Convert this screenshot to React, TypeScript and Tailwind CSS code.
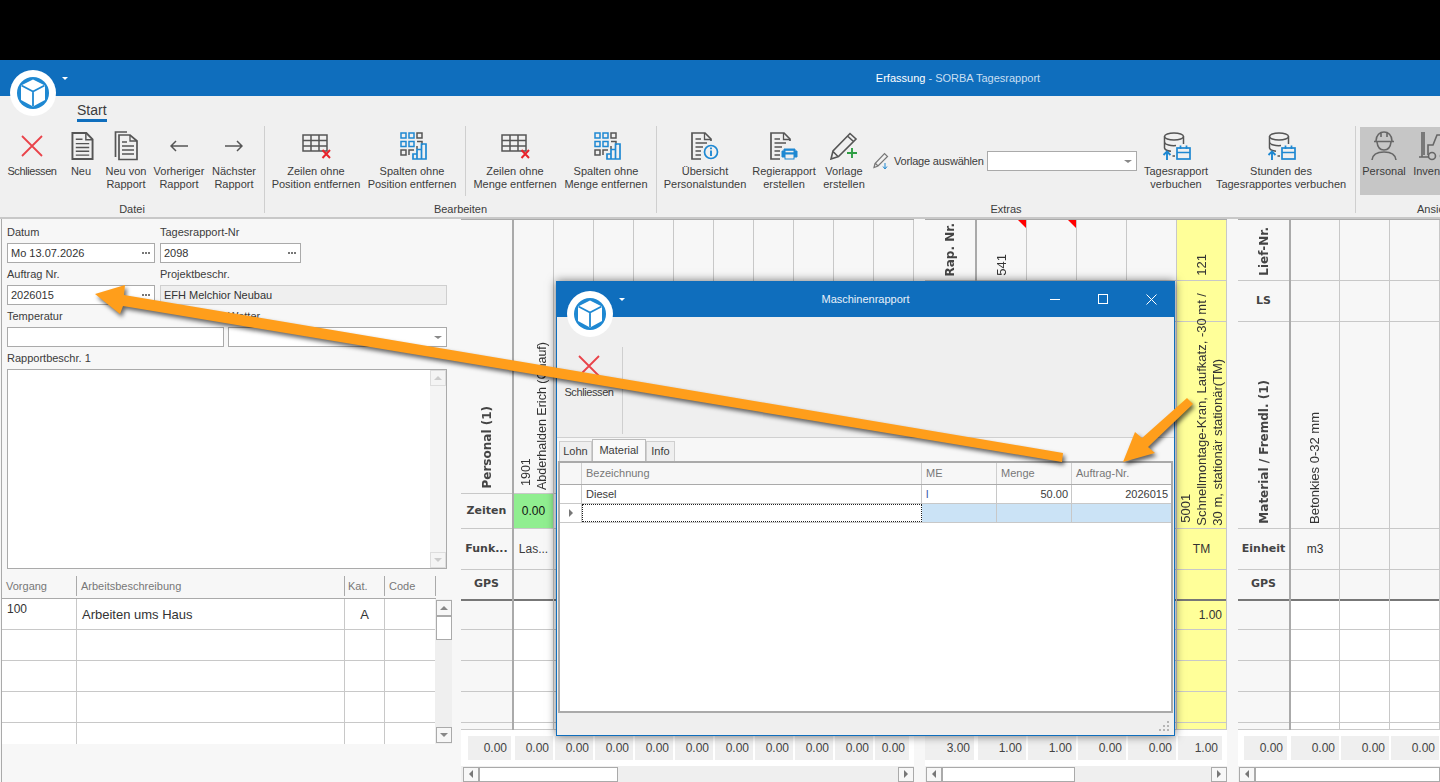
import React from "react";
import { Fragment } from "react";

const GRAY = "#555555";
const BLUE = "#1e88d2";
const RED = "#e9434a";

// Shared logo: white disc with the blue cube
const Logo = () => (
  <svg width="46" height="46" viewBox="0 0 46 46">
    <circle cx="23" cy="23" r="23" fill="#ffffff" />
    <circle cx="23" cy="23" r="16" fill={BLUE} />
    <path d="M23 9.5 35 15.5V30L23 36.5 11 30V15.5Z" fill="#ffffff" />
    <path d="M11.5 15.5 23 21.5 34.5 15.5M23 21.5V36" fill="none" stroke={BLUE} strokeWidth="1.8" />
  </svg>
);

const CloseX = () => (
  <svg width="22" height="22" viewBox="0 0 22 22">
    <path d="M1 1 21 21M21 1 1 21" stroke={RED} strokeWidth="1.8" fill="none" />
  </svg>
);

const DocIcon = () => (
  <svg className="ml-[2px]" width="23" height="30" viewBox="0 0 24 30" fill="none" stroke={GRAY} strokeWidth="2">
    <path d="M1.5 1.5H16L22.5 8V28.5H1.5Z" />
    <path d="M15.5 1.5V8.5H22.5" strokeWidth="1.5" />
    <path d="M5 8H12M5 12.5H19M5 16.5H19M5 20.5H19M5 24.5H19" strokeWidth="1.5" />
  </svg>
);

const CopyIcon = () => (
  <svg width="24" height="30" viewBox="0 0 24 30" fill="none" stroke={GRAY} strokeWidth="1.7">
    <path d="M1.5 26V1H13" />
    <path d="M5 4H16L23 10V28.5H5Z" />
    <path d="M16 4V10H23" strokeWidth="1.3" />
    <path d="M8 11H13M8 15H20M8 19H20M8 23H20" strokeWidth="1.4" />
  </svg>
);

const ArrowLeft = () => (
  <svg width="18" height="12" viewBox="0 0 18 12" fill="none" stroke={GRAY} strokeWidth="1.5">
    <path d="M18 6H1M6 1 1 6 6 11" />
  </svg>
);

const ArrowRight = () => (
  <svg width="18" height="12" viewBox="0 0 18 12" fill="none" stroke={GRAY} strokeWidth="1.5">
    <path d="M0 6H17M12 1 17 6 12 11" />
  </svg>
);

const TableX = () => (
  <svg width="29" height="25" viewBox="0 0 29 25" fill="none">
    <path d="M1 1H25V17H1ZM1 6.5H25M1 12H25M9 1V17M17 1V17" stroke={GRAY} strokeWidth="1.5" />
    <path d="M20.5 16 28 24M28 16 20.5 24" stroke="#e8242c" strokeWidth="2" />
  </svg>
);

const QrChart = () => (
  <svg className="ml-[3px]" width="28" height="28" viewBox="0 0 28 28" fill="none" strokeWidth="1.5">
    <g stroke={BLUE}>
      <rect x="1" y="1" width="5" height="5" />
      <rect x="9" y="1" width="5" height="5" />
      <rect x="1" y="9.5" width="5" height="5" />
      <rect x="9" y="9.5" width="5" height="5" />
    </g>
    <g stroke={GRAY}>
      <rect x="17" y="1" width="5" height="5" />
      <rect x="1" y="18" width="5" height="5" />
      <path d="M17 9.5H22V13M9 23V18H14M17 17V14" />
    </g>
    <g stroke={BLUE} strokeWidth="1.7">
      <path d="M13 22H17V27H13ZM17 17.5H21.5V27H17ZM21.5 12H26V27H21.5Z" />
    </g>
  </svg>
);

const DocBase = () => (
  <g fill="none" stroke={GRAY}>
    <path d="M1 23V1H14L20 7V9" strokeWidth="1.7" />
    <path d="M1 23V27H10" strokeWidth="1.7" />
    <path d="M13.5 1V7.5H20" strokeWidth="1.3" />
    <path d="M4.5 7H10M4.5 11H16M4.5 15H12M4.5 19H10M4.5 23H10" strokeWidth="1.4" />
  </g>
);

const DocInfo = () => (
  <svg width="28" height="28" viewBox="0 0 28 28">
    <DocBase />
    <circle cx="20" cy="20" r="6.5" fill="#f0f0f0" stroke={BLUE} strokeWidth="1.7" />
    <path d="M20 18.5V24M20 15.5V17.2" stroke={BLUE} strokeWidth="1.9" />
  </svg>
);

const DocPrinter = () => (
  <svg width="28" height="28" viewBox="0 0 28 28">
    <DocBase />
    <path d="M14 19V17H25V19H27V25H12V19Z" fill={BLUE} stroke={BLUE} />
    <rect x="15" y="22" width="9" height="5" fill="#f0f0f0" stroke={BLUE} />
    <rect x="15.5" y="18.8" width="8" height="1.5" fill="#f0f0f0" />
  </svg>
);

const PencilPlus = () => (
  <svg width="28" height="28" viewBox="0 0 28 28" fill="none">
    <path d="M1 27 3 19 20 1.5 26 7 8.5 24.5ZM3 19.5 8 24.5M17.5 4 23.5 9.5" stroke={GRAY} strokeWidth="1.6" />
    <path d="M22 16V26M17 21H27" stroke="#2f9e44" strokeWidth="1.9" />
  </svg>
);

const PencilDown = () => (
  <svg width="16" height="18" viewBox="0 0 16 18" fill="none">
    <path d="M1 15.5 2 11.5 11.5 1.5 14.5 4.5 5 14ZM2.5 11.5 5 14" stroke="#777777" strokeWidth="1.2" />
    <path d="M12 11V16M10 14.5 12 17 14 14.5" stroke={BLUE} strokeWidth="1" />
  </svg>
);

const DbCalendar = () => (
  <svg width="29" height="28" viewBox="0 0 29 28" fill="none">
    <g stroke={GRAY} strokeWidth="1.5">
      <ellipse cx="12" cy="4.5" rx="9.5" ry="3.5" />
      <path d="M2.5 4.5V16C3 18 6 19 9 19.3M21.5 4.5V12M2.5 10C3 13 9 14 14 13.6M10.5 24H13" />
    </g>
    <path d="M5 28V20M1.5 23 5 19.5 8.5 23" stroke={BLUE} strokeWidth="1.9" />
    <rect x="15" y="16" width="13" height="11" stroke={BLUE} strokeWidth="1.7" />
    <path d="M15 20.5H28M18.5 13.5V17M24.5 13.5V17" stroke={BLUE} strokeWidth="1.7" />
  </svg>
);

const Helmet = () => (
  <svg width="26" height="30" viewBox="0 0 26 30" fill="none" stroke="#666666" strokeWidth="1.6">
    <path d="M5 10C5 4 9 1 13 1 17 1 21 4 21 10M3 10.5H23M10 1.5V6M16 1.5V6" />
    <path d="M6 11C6.5 16 9 19 13 19 17 19 19.5 16 20 11" />
    <path d="M1 29C1.5 24 6 21 13 21 20 21 24.5 24 25 29" />
  </svg>
);

const Forklift = () => (
  <svg width="30" height="30" viewBox="0 0 30 30" fill="none" stroke="#666666" strokeWidth="1.6">
    <path d="M4 1V26H1M4 26H10M6 1V24" />
    <path d="M10 24V14H15L19 4H27L29 14V24H22" />
    <circle cx="14" cy="25" r="3.5" />
    <circle cx="26" cy="25" r="3.5" />
  </svg>
);

// Big ribbon button: icon above one or two centred lines
const RibbonButton = ({ width, icon, lines, tight }: { width: string; icon: React.ReactNode; lines: string[]; tight?: boolean }) => (
  <div className={`flex flex-col items-center pt-[8px] ${width}`}>
    <div className="flex h-[32px] items-center justify-center">{icon}</div>
    <div className={`mt-[3px] flex flex-col items-center whitespace-nowrap text-[11px] leading-[13px] text-[#3c3c3c] ${tight ? "tracking-[-0.4px]" : ""}`}>
      {lines.map((l) => (
        <span key={l}>{l}</span>
      ))}
    </div>
  </div>
);

const GroupLabel = ({ children }: { children: React.ReactNode }) => (
  <div className="h-[16px] text-center text-[11px] leading-[16px] text-[#3c3c3c]">{children}</div>
);

const RibbonSep = ({ short }: { short?: boolean }) => (
  <div className={`mt-[4px] w-px shrink-0 bg-[#cfcfcf] ${short ? "h-[70px]" : "h-[87px]"}`} />
);

const Ribbon = () => (
  <div className="h-[123px] border-b-2 border-[#c8c8c8] bg-[#f0f0f0]">
    <div className="h-[26px] pl-[77px]">
      <div className="inline-block h-[26px] w-[30px] border-b-[3px] border-[#0f6ebd] pt-[5px] text-[14px] leading-[18px] text-[#3c3c3c]">
        Start
      </div>
    </div>
    <div className="flex">
      <div className="w-[264px] shrink-0">
        <div className="flex h-[79px] pl-[7px]">
          <RibbonButton width="w-[50px]" icon={<CloseX />} lines={["Schliessen"]} tight />
          <RibbonButton width="w-[48px]" icon={<DocIcon />} lines={["Neu"]} />
          <RibbonButton width="w-[42px]" icon={<CopyIcon />} lines={["Neu von", "Rapport"]} />
          <RibbonButton width="w-[64px]" icon={<ArrowLeft />} lines={["Vorheriger", "Rapport"]} />
          <RibbonButton width="w-[46px]" icon={<ArrowRight />} lines={["Nächster", "Rapport"]} />
        </div>
        <GroupLabel>Datei</GroupLabel>
      </div>
      <RibbonSep />
      <div className="w-[391px] shrink-0">
        <div className="flex h-[79px]">
          <RibbonButton width="w-[102px]" icon={<TableX />} lines={["Zeilen ohne", "Position entfernen"]} />
          <RibbonButton width="w-[90px]" icon={<QrChart />} lines={["Spalten ohne", "Position entfernen"]} />
          <div className="ml-[8px]">
            <RibbonSep short />
          </div>
          <RibbonButton width="w-[98px]" icon={<TableX />} lines={["Zeilen ohne", "Menge entfernen"]} />
          <RibbonButton width="w-[84px]" icon={<QrChart />} lines={["Spalten ohne", "Menge entfernen"]} />
        </div>
        <GroupLabel>Bearbeiten</GroupLabel>
      </div>
      <RibbonSep />
      <div className="w-[698px] shrink-0">
        <div className="flex h-[79px]">
          <RibbonButton width="w-[96px]" icon={<DocInfo />} lines={["Übersicht", "Personalstunden"]} />
          <RibbonButton width="w-[62px]" icon={<DocPrinter />} lines={["Regierapport", "erstellen"]} />
          <RibbonButton width="w-[58px]" icon={<PencilPlus />} lines={["Vorlage", "erstellen"]} />
          <div className="mt-[29px] flex h-[20px] w-[264px] items-center">
            <PencilDown />
            <span className="ml-[5px] w-[92px] whitespace-nowrap text-[11px] tracking-[-0.2px] text-[#3c3c3c]">Vorlage auswählen</span>
            <div className="relative ml-[1px] h-[20px] w-[150px] border border-[#aaaaaa] bg-white">
              <Caret />
            </div>
          </div>
          <RibbonButton width="w-[78px]" icon={<DbCalendar />} lines={["Tagesrapport", "verbuchen"]} />
          <RibbonButton width="w-[132px]" icon={<DbCalendar />} lines={["Stunden des", "Tagesrapportes verbuchen"]} />
        </div>
        <GroupLabel>Extras</GroupLabel>
      </div>
      <RibbonSep />
      <div className="w-[84px] shrink-0 overflow-hidden">
        <div className="ml-[4px] mt-[5px] flex h-[68px] w-[110px] bg-[#c6c6c6]">
          <div className="flex w-[48px] flex-col items-center pt-[4px]">
            <Helmet />
            <span className="mt-[4px] text-[11px] leading-[13px] text-[#3c3c3c]">Personal</span>
          </div>
          <div className="flex w-[50px] flex-col items-center pt-[4px]">
            <Forklift />
            <span className="mt-[4px] text-[11px] leading-[13px] text-[#3c3c3c]">Inventar</span>
          </div>
        </div>
        <div className="mt-[6px] h-[16px] whitespace-nowrap pl-[61px] text-[11px] leading-[16px] text-[#3c3c3c]">
          Ansicht
        </div>
      </div>
    </div>
  </div>
);

const Caret = () => (
  <span className="absolute right-[4px] top-[8px] h-0 w-0 border-x-[4px] border-t-[3px] border-x-transparent border-t-[#888888]" />
);

const Dots = () => (
  <span className="absolute right-[4px] top-[8px] flex gap-[1px]">
    <i className="h-[2px] w-[2px] bg-[#777777]" />
    <i className="h-[2px] w-[2px] bg-[#777777]" />
    <i className="h-[2px] w-[2px] bg-[#777777]" />
  </span>
);

const Field = ({ width, label, value, dots, caret, disabled }: {
  width: string;
  label: string;
  value?: string;
  dots?: boolean;
  caret?: boolean;
  disabled?: boolean;
}) => (
  <div className={width}>
    <div className="h-[22px] text-[11px] leading-[22px] text-[#3c3c3c]">{label}</div>
    <div
      className={`relative h-[20px] border pl-[3px] text-[11px] leading-[18px] text-[#333333] ${
        disabled ? "border-[#cfcfcf] bg-[#efefef]" : "border-[#aaaaaa] bg-white"
      }`}
    >
      {value}
      {dots && <Dots />}
      {caret && <Caret />}
    </div>
  </div>
);

const ScrollTri = ({ dir, faint }: { dir: "up" | "down" | "left" | "right"; faint?: boolean }) => {
  if (dir === "up")
    return (
      <span className={`h-0 w-0 border-x-[4px] border-b-[4px] border-x-transparent ${faint ? "border-b-[#cccccc]" : "border-b-[#888888]"}`} />
    );
  if (dir === "down")
    return (
      <span className={`h-0 w-0 border-x-[4px] border-t-[4px] border-x-transparent ${faint ? "border-t-[#cccccc]" : "border-t-[#888888]"}`} />
    );
  if (dir === "left")
    return <span className="h-0 w-0 border-y-[4px] border-r-[4px] border-y-transparent border-r-[#777777]" />;
  return <span className="h-0 w-0 border-y-[4px] border-l-[4px] border-y-transparent border-l-[#777777]" />;
};

const TASK_ROWS = ["h-[31px]", "h-[31px]", "h-[31px]", "h-[31px]", "h-[21px]"];

const LeftPanel = () => (
  <div className="h-[563px] w-[461px] shrink-0 bg-[#f7f7f7] pl-[1px]">
    <div className="h-full border-l border-[#aaaaaa] pl-[5px] pt-[2px]">
      <div className="flex gap-[5px]">
        <Field width="w-[148px]" label="Datum" value="Mo 13.07.2026" dots />
        <Field width="w-[141px]" label="Tagesrapport-Nr" value="2098" dots />
      </div>
      <div className="flex gap-[5px]">
        <Field width="w-[148px]" label="Auftrag Nr." value="2026015" dots />
        <Field width="w-[287px]" label="Projektbeschr." value="EFH Melchior Neubau" disabled />
      </div>
      <div className="flex gap-[4px]">
        <Field width="w-[217px]" label="Temperatur" />
        <Field width="w-[219px]" label="Wetter" caret />
      </div>
      <div className="h-[22px] text-[11px] leading-[22px] text-[#3c3c3c]">Rapportbeschr. 1</div>
      <div className="flex h-[200px] w-[440px] justify-end border border-[#aaaaaa] bg-white">
        <div className="flex w-[16px] flex-col justify-between bg-[#f4f4f4]">
          <div className="flex h-[16px] items-center justify-center border border-[#dddddd]">
            <ScrollTri dir="up" faint />
          </div>
          <div className="flex h-[16px] items-center justify-center border border-[#dddddd]">
            <ScrollTri dir="down" faint />
          </div>
        </div>
      </div>
      <div className="-ml-[5px] mt-[7px] flex h-[23px] w-[434px] items-start border-b border-[#aaaaaa] text-[11px] leading-[20px] text-[#777777]">
        <div className="h-[20px] w-[75px] border-r border-[#aaaaaa] pl-[4px]">Vorgang</div>
        <div className="h-[20px] w-[268px] border-r border-[#aaaaaa] pl-[4px]">Arbeitsbeschreibung</div>
        <div className="h-[20px] w-[40px] border-r border-[#aaaaaa] pl-[3px]">Kat.</div>
        <div className="h-[20px] w-[51px] border-r border-[#aaaaaa] pl-[4px]">Code</div>
      </div>
      <div className="-ml-[5px] flex w-[450px]">
        <div className="w-[433px] bg-white">
          {TASK_ROWS.map((row, i) => (
            <div key={i} className={`flex ${row} ${i < 4 ? "border-b border-[#c8c8c8]" : ""}`}>
              <div className="w-[75px] border-r border-[#c8c8c8] pl-[5px] pt-[2px] text-[12px] leading-[16px] text-[#333333]">
                {i === 0 && "100"}
              </div>
              <div className="w-[268px] border-r border-[#c8c8c8] pl-[5px] text-[13px] leading-[31px] text-[#333333]">
                {i === 0 && "Arbeiten ums Haus"}
              </div>
              <div className="w-[40px] border-r border-[#c8c8c8] text-center text-[13px] leading-[31px] text-[#333333]">
                {i === 0 && "A"}
              </div>
            </div>
          ))}
        </div>
        <div className="flex w-[17px] flex-col items-center justify-between bg-[#efefef] py-[1px]">
          <div className="w-[16px]">
            <div className="flex h-[16px] items-center justify-center border border-[#aaaaaa] bg-[#f7f7f7]">
              <ScrollTri dir="up" />
            </div>
            <div className="h-[24px] border border-[#aaaaaa] bg-white" />
          </div>
          <div className="flex h-[16px] w-[16px] items-center justify-center border border-[#aaaaaa] bg-[#f7f7f7]">
            <ScrollTri dir="down" />
          </div>
        </div>
      </div>
    </div>
  </div>
);

const BOLD = "font-bold [font-family:'DejaVu_Sans',sans-serif] text-[11px] text-[#444444]";
const VERT = "[writing-mode:vertical-rl] rotate-180 whitespace-nowrap";
const VERT_BOLD = `${VERT} text-[12px]`;

// Rows below the thick divider are the same in every section
const LowerRows = ({ yellow, head, value }: { yellow?: boolean; head?: boolean; value?: string }) => {
  const bg = yellow ? "bg-[#ffff99]" : head ? "bg-[#f7f7f7]" : "bg-white";
  return (
    <Fragment>
      <div className="h-[2px] bg-[#777777]" />
      <div className={`h-[29px] border-b border-[#c8c8c8] pr-[4px] text-right text-[12px] leading-[28px] text-[#333333] ${bg}`}>
        {value}
      </div>
      <div className={`h-[31px] border-b border-[#c8c8c8] ${bg}`} />
      <div className={`h-[31px] border-b border-[#c8c8c8] ${bg}`} />
      <div className={`h-[31px] border-b border-[#c8c8c8] ${bg}`} />
      <div className={`h-[7px] border-b border-[#c8c8c8] ${bg}`} />
    </Fragment>
  );
};

// Columns of the first section have the short name row
const PersonalCol = ({ width, name, zeit, funk }: { width: string; name?: React.ReactNode; zeit?: string; funk?: string }) => (
  <div className={`flex shrink-0 flex-col border-r border-[#c8c8c8] ${width}`}>
    <div className="flex h-[274px] items-end justify-center border-b border-[#c8c8c8] pb-[3px] text-[12.5px] leading-[16px] text-[#333333]">
      {name}
    </div>
    <div className={`h-[35px] border-b border-[#c8c8c8] text-center text-[12px] leading-[34px] ${zeit ? "bg-[#90ee90] text-[#111111]" : ""}`}>
      {zeit}
    </div>
    <div className="h-[41px] border-b border-[#c8c8c8] text-center text-[12px] leading-[40px] text-[#3c3c3c]">{funk}</div>
    <div className="h-[29px]" />
    <LowerRows />
  </div>
);

const HeadCol = ({ width, thick, rows }: { width: string; thick?: boolean; rows: React.ReactNode[] }) => (
  <div className={`flex shrink-0 flex-col bg-[#f7f7f7] ${width} ${thick ? "border-r-2 border-[#aaaaaa]" : ""}`}>
    {rows}
    <LowerRows head />
  </div>
);

const Corner = () => (
  <span className="absolute right-0 top-0 h-0 w-0 border-l-[8px] border-t-[8px] border-l-transparent border-t-[#ff0000]" />
);

const MachineCol = ({ width, top, corner, yellow, name, unit, value }: {
  width: string;
  top?: string;
  corner?: boolean;
  yellow?: boolean;
  name?: React.ReactNode;
  unit?: string;
  value?: string;
}) => (
  <div className={`flex shrink-0 flex-col border-r border-[#c8c8c8] ${width} ${yellow ? "bg-[#ffff99]" : ""}`}>
    <div className="relative flex h-[61px] items-end justify-center border-b border-[#c8c8c8] pb-[4px] text-[13px] leading-[16px] text-[#333333]">
      {corner && <Corner />}
      {top && <span className={VERT}>{top}</span>}
    </div>
    <div className="h-[41px] border-b border-[#c8c8c8]" />
    <div className="flex h-[207px] items-end justify-center border-b border-[#c8c8c8] pb-[2px] text-[13px] leading-[16px] text-[#333333]">
      {name}
    </div>
    <div className="h-[41px] border-b border-[#c8c8c8] text-center text-[12px] leading-[40px] text-[#333333]">{unit}</div>
    <div className="h-[29px]" />
    <LowerRows yellow={yellow} value={value} />
  </div>
);

const rowLine = "border-b border-[#c8c8c8]";

const SumCell = ({ cls, value }: { cls: string; value: string }) => (
  <div className={`h-[24px] shrink-0 bg-[#efefef] pr-[4px] text-right text-[12px] leading-[24px] text-[#444444] ${cls}`}>
    {value}
  </div>
);

const HScroll = ({ thumb, noEnd, pad }: { thumb: string; noEnd?: boolean; pad: string }) => (
  <div className={`flex h-[16px] items-center bg-[#efefef] ${pad}`}>
    <div className="flex h-[15px] w-[16px] shrink-0 items-center justify-center border border-[#aaaaaa] bg-[#f7f7f7]">
      <ScrollTri dir="left" />
    </div>
    <div className={`h-[15px] border border-[#aaaaaa] bg-white ${thumb}`} />
    {!noEnd && <div className="flex-1" />}
    {!noEnd && (
      <div className="flex h-[15px] w-[16px] shrink-0 items-center justify-center border border-[#aaaaaa] bg-[#f7f7f7]">
        <ScrollTri dir="right" />
      </div>
    )}
  </div>
);

const SECTION1_COLS = ["c2", "c3", "c4", "c5", "c6", "c7", "c8", "c9", "c10"];

const Section1 = () => (
  <div className="flex w-[453px] shrink-0 flex-col">
    <div className="flex h-[511px] border-t border-[#aaaaaa]">
      <HeadCol
        width="w-[53px]"
        thick
        rows={[
          <div key="a" className={`flex h-[274px] items-end justify-center pb-[5px] ${rowLine} ${BOLD}`}>
            <span className={VERT_BOLD}>Personal (1)</span>
          </div>,
          <div key="b" className={`h-[35px] text-center leading-[34px] ${rowLine} ${BOLD}`}>Zeiten</div>,
          <div key="c" className={`h-[41px] text-center leading-[40px] ${rowLine} ${BOLD}`}>Funk...</div>,
          <div key="d" className={`h-[29px] text-center leading-[28px] ${BOLD}`}>GPS</div>,
        ]}
      />
      <PersonalCol
        width="w-[40px]"
        zeit="0.00"
        funk="Las..."
        name={
          <span className={VERT}>
            <span className="ms-[4px] inline-block">1901</span>
            <br />
            Abderhalden Erich (Chauf)
          </span>
        }
      />
      {SECTION1_COLS.map((c) => (
        <PersonalCol key={c} width="w-[40px]" />
      ))}
    </div>
    <div className="flex h-[36px] bg-white pt-[6px]">
      <SumCell cls="ml-[7px] w-[43px]" value="0.00" />
      <SumCell cls="ml-[4px] w-[38px]" value="0.00" />
      {SECTION1_COLS.slice(0, 8).map((c) => (
        <SumCell key={c} cls="ml-[2px] w-[38px]" value="0.00" />
      ))}
      <SumCell cls="ml-[2px] w-[34px]" value="0.00" />
    </div>
    <HScroll thumb="w-[139px]" pad="pl-[2px]" />
  </div>
);

const Section2 = () => (
  <div className="flex w-[302px] shrink-0 flex-col">
    <div className="flex h-[511px] border-t border-[#aaaaaa]">
      <HeadCol
        width="w-[52px]"
        thick
        rows={[
          <div key="a" className={`flex h-[61px] items-end justify-center pb-[4px] ${rowLine} ${BOLD}`}>
            <span className={VERT_BOLD}>Rap. Nr.</span>
          </div>,
          <div key="b" className={`h-[41px] ${rowLine}`} />,
          <div key="c" className={`h-[207px] ${rowLine}`} />,
          <div key="d" className={`h-[41px] ${rowLine}`} />,
          <div key="e" className="h-[29px]" />,
        ]}
      />
      <MachineCol width="w-[50px]" top="541" corner />
      <MachineCol width="w-[50px]" corner />
      <MachineCol width="w-[50px]" />
      <MachineCol width="w-[50px]" />
      <MachineCol
        width="w-[50px]"
        yellow
        top="121"
        unit="TM"
        value="1.00"
        name={
          <span className={VERT}>
            <span className="ms-[3px] inline-block">5001</span>
            <br />
            Schnellmontage-Kran, Laufkatz, -30 mt /
            <br />
            30 m, stationär stationär(TM)
          </span>
        }
      />
    </div>
    <div className="flex h-[36px] bg-white pt-[6px]">
      <SumCell cls="w-[49px]" value="3.00" />
      <SumCell cls="ml-[4px] w-[48px]" value="1.00" />
      <SumCell cls="ml-[2px] w-[48px]" value="1.00" />
      <SumCell cls="ml-[2px] w-[48px]" value="0.00" />
      <SumCell cls="ml-[2px] w-[48px]" value="0.00" />
      <SumCell cls="ml-[2px] w-[44px]" value="1.00" />
    </div>
    <HScroll thumb="w-[133px]" pad="pl-[1px]" />
  </div>
);

const Section3 = () => (
  <div className="flex w-[202px] shrink-0 flex-col">
    <div className="flex h-[511px] border-t border-[#aaaaaa]">
      <HeadCol
        width="w-[53px]"
        thick
        rows={[
          <div key="a" className={`flex h-[61px] items-end justify-center pb-[4px] ${rowLine} ${BOLD}`}>
            <span className={VERT_BOLD}>Lief-Nr.</span>
          </div>,
          <div key="b" className={`h-[41px] text-center leading-[40px] ${rowLine} ${BOLD}`}>LS</div>,
          <div key="c" className={`flex h-[207px] items-end justify-center pb-[4px] ${rowLine} ${BOLD}`}>
            <span className={VERT_BOLD}>Material / Fremdl. (1)</span>
          </div>,
          <div key="d" className={`h-[41px] text-center leading-[40px] ${rowLine} ${BOLD}`}>Einheit</div>,
          <div key="e" className={`h-[29px] text-center leading-[28px] ${BOLD}`}>GPS</div>,
        ]}
      />
      <MachineCol width="w-[49px]" unit="m3" name={<span className={`${VERT} pt-[2px] pb-[2px]`}>Betonkies 0-32 mm</span>} />
      <MachineCol width="w-[50px]" />
      <MachineCol width="w-[50px]" />
    </div>
    <div className="flex h-[36px] bg-white pt-[6px]">
      <SumCell cls="ml-[6px] w-[43px]" value="0.00" />
      <SumCell cls="ml-[4px] w-[48px]" value="0.00" />
      <SumCell cls="ml-[2px] w-[48px]" value="0.00" />
      <SumCell cls="ml-[2px] w-[48px]" value="0.00" />
    </div>
    <HScroll thumb="flex-1" noEnd pad="pl-[1px]" />
  </div>
);

const DialogCell = ({ width, children, cls = "" }: { width: string; children?: React.ReactNode; cls?: string }) => (
  <div className={`h-full shrink-0 border-r border-[#c8c8c8] px-[3px] ${width} ${cls}`}>{children}</div>
);

const Dialog = () => (
  <div className="absolute left-[556px] top-[281px] flex h-[455px] w-[619px] flex-col border border-[#0f6ebd] bg-[#efefef] shadow-[0_0_9px_rgba(0,0,0,0.55)]">
    <div className="relative h-[35px] shrink-0 bg-[#0f6ebd] text-center text-[11px] leading-[35px] text-[#e8f1f9]">
      Maschinenrapport
      <span className="absolute left-[62px] top-[16px] h-0 w-0 border-x-[3px] border-t-[3px] border-x-transparent border-t-white" />
      <span className="absolute left-[493px] top-[17px] h-px w-[10px] bg-white" />
      <span className="absolute left-[541px] top-[12px] h-[10px] w-[10px] border border-white" />
      <svg className="absolute left-[589px] top-[12px]" width="11" height="11" viewBox="0 0 11 11">
        <path d="M0.5 0.5 10.5 10.5M10.5 0.5 0.5 10.5" stroke="#ffffff" strokeWidth="1" />
      </svg>
    </div>
    <div className="relative flex h-[121px] shrink-0 border-b border-[#d0d0d0] bg-[#efefef]">
      <div className="ml-[7px] flex w-[50px] flex-col items-center pt-[38px]">
        <CloseX />
        <span className="mt-[9px] text-[11px] leading-[13px] tracking-[-0.4px] text-[#3c3c3c]">Schliessen</span>
      </div>
      <div className="ml-[8px] mt-[30px] h-[87px] w-px bg-[#cfcfcf]" />
    </div>
    <div className="flex h-[23px] shrink-0 items-end bg-[#f7f7f7] pl-[2px] text-[11px] text-[#3c3c3c]">
      <div className="flex h-[20px] w-[33px] items-center justify-center border border-b-0 border-[#cfcfcf] bg-[#efefef]">Lohn</div>
      <div className="flex h-[22px] w-[54px] items-center justify-center border border-b-0 border-[#bbbbbb] bg-[#f9f9f9]">Material</div>
      <div className="flex h-[20px] w-[29px] items-center justify-center border border-b-0 border-[#cfcfcf] bg-[#efefef]">Info</div>
    </div>
    <div className="ml-[1px] h-[252px] w-[615px] shrink-0 border-2 border-[#aaaaaa] bg-white text-[11px]">
      <div className="flex h-[22px] items-center border-b border-[#aaaaaa] bg-[#f7f7f7] leading-[21px] text-[#777777]">
        <DialogCell width="w-[22px]" cls="border-[#cfcfcf]" />
        <DialogCell width="w-[340px]" cls="border-[#cfcfcf] px-[4px]">Bezeichnung</DialogCell>
        <DialogCell width="w-[75px]" cls="border-[#cfcfcf] px-[4px]">ME</DialogCell>
        <DialogCell width="w-[75px]" cls="border-[#cfcfcf] px-[4px]">Menge</DialogCell>
        <div className="px-[4px]">Auftrag-Nr.</div>
      </div>
      <div className="flex h-[19px] border-b border-[#c8c8c8] leading-[18px] text-[#3c3c3c]">
        <DialogCell width="w-[22px]" />
        <DialogCell width="w-[340px]" cls="px-[4px]">Diesel</DialogCell>
        <DialogCell width="w-[75px]" cls="px-[4px] text-[#3556a8]">l</DialogCell>
        <DialogCell width="w-[75px]" cls="text-right">50.00</DialogCell>
        <div className="w-[100px] px-[3px] text-right">2026015</div>
      </div>
      <div className="flex h-[19px] border-b border-[#c8c8c8]">
        <DialogCell width="w-[22px]" cls="flex items-center justify-center px-0">
          <ScrollTri dir="right" />
        </DialogCell>
        <div className="h-full w-[340px] shrink-0 border border-dotted border-[#222222]" />
        <DialogCell width="w-[75px]" cls="bg-[#cbe3f6]" />
        <DialogCell width="w-[75px]" cls="bg-[#cbe3f6]" />
        <div className="h-full flex-1 bg-[#cbe3f6]" />
      </div>
    </div>
    <div className="relative flex-1 bg-[#efefef]">
      <svg className="absolute bottom-[3px] right-[4px]" width="11" height="11" viewBox="0 0 11 11" fill="#b5b5b5">
        <rect x="8" y="0" width="2" height="2" />
        <rect x="4" y="4" width="2" height="2" />
        <rect x="8" y="4" width="2" height="2" />
        <rect x="0" y="8" width="2" height="2" />
        <rect x="4" y="8" width="2" height="2" />
        <rect x="8" y="8" width="2" height="2" />
      </svg>
    </div>
    <div className="absolute left-[10px] top-[9px]">
      <Logo />
    </div>
  </div>
);

// The two annotation arrows drawn on top of the screenshot
const Annotations = () => (
  <svg
    className="pointer-events-none absolute left-0 top-0 drop-shadow-[2px_3px_2px_rgba(0,0,0,0.6)]"
    width="1440"
    height="782"
    viewBox="0 0 1440 782"
  >
    <polygon points="1063,453 124,295 125,285 95,294 120,314 123,306 1062,462" fill="#ff9e1b" />
    <polygon points="1187,398 1142,438 1135,432 1123,462 1155,453 1148,447 1193,404" fill="#ff9e1b" />
  </svg>
);

export default function App() {
  return (
    <div className="relative h-[782px] w-[1440px] overflow-hidden bg-[#f7f7f7] [font-family:'Liberation_Sans',sans-serif]">
      <div className="h-[60px] bg-black" />
      <div className="relative h-[36px] bg-[#0f6ebd] pl-[476px] text-center text-[11px] leading-[36px] text-white">
        Erfassung <span className="text-[#c9dff2]">- SORBA Tagesrapport</span>
        <span className="absolute left-[62px] top-[17px] h-0 w-0 border-x-[3px] border-t-[3px] border-x-transparent border-t-white" />
      </div>
      <Ribbon />
      <div className="flex">
        <LeftPanel />
        <div className="flex items-start">
          <Section1 />
          <div className="h-[563px] w-[11px] shrink-0 bg-[#f7f7f7]" />
          <Section2 />
          <div className="h-[563px] w-[11px] shrink-0 bg-[#f7f7f7]" />
          <Section3 />
        </div>
      </div>
      <div className="absolute left-[10px] top-[70px]">
        <Logo />
      </div>
      <Dialog />
      <Annotations />
    </div>
  );
}
